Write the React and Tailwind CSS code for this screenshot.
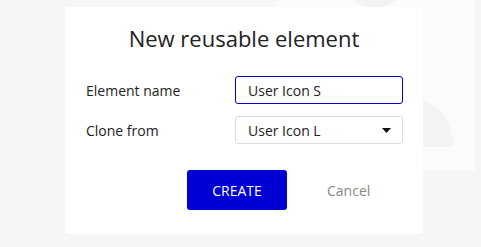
export default function App() {
  const font = { fontFamily: '"Open Sans", "Noto Sans", sans-serif' };
  return (
    <div className="relative w-[481px] h-[247px] overflow-hidden bg-[#f6f6f6]" style={font}>
      <div className="ml-[275px] w-[200px] h-[171px] bg-[#fbfbfb] relative overflow-hidden">
        <div className="absolute left-[70px] top-[-52px] w-[60px] h-[60px] rounded-full bg-[#f3f3f3]" />
        <div className="absolute left-[40px] top-[96px] w-[138px] h-[51px] rounded-tr-[48px] rounded-tl-[48px] bg-[#f3f3f3]" />
      </div>
      <div className="absolute left-[65px] top-[7px] w-[358px] h-[227px] bg-white rounded-[3px] flex flex-col">
        <h1 className="text-center text-[22px] leading-[30px] text-[#222] mt-[16px]">New reusable element</h1>
        <div className="mt-[23px] flex items-center pl-[21px] pr-[20px]">
          <span className="w-[149px] text-[14px] text-[#222]">Element name</span>
          <div className="w-[168px] h-[28px] border border-[#0000cc] rounded-[3px] flex items-center pl-[12px] text-[14px] text-[#222]">User Icon S</div>
        </div>
        <div className="mt-[12px] flex items-center pl-[21px] pr-[20px]">
          <span className="w-[149px] text-[14px] text-[#222]">Clone from</span>
          <div className="w-[168px] h-[28px] border border-[#dddddd] rounded-[3px] flex items-center justify-between pl-[12px] pr-[11px] text-[14px] text-[#222]">
            <span>User Icon L</span>
            <svg width="9" height="5" viewBox="0 0 9 5"><path d="M0 0h9L4.5 5z" fill="#111" /></svg>
          </div>
        </div>
        <div className="mt-[26px] flex items-center pl-[122px]">
          <button className="w-[100px] h-[40px] bg-[#0000d4] rounded-[3px] text-white text-[14px] uppercase">Create</button>
          <span className="ml-[40px] text-[14px] text-[#888]">Cancel</span>
        </div>
      </div>
    </div>
  );
}
